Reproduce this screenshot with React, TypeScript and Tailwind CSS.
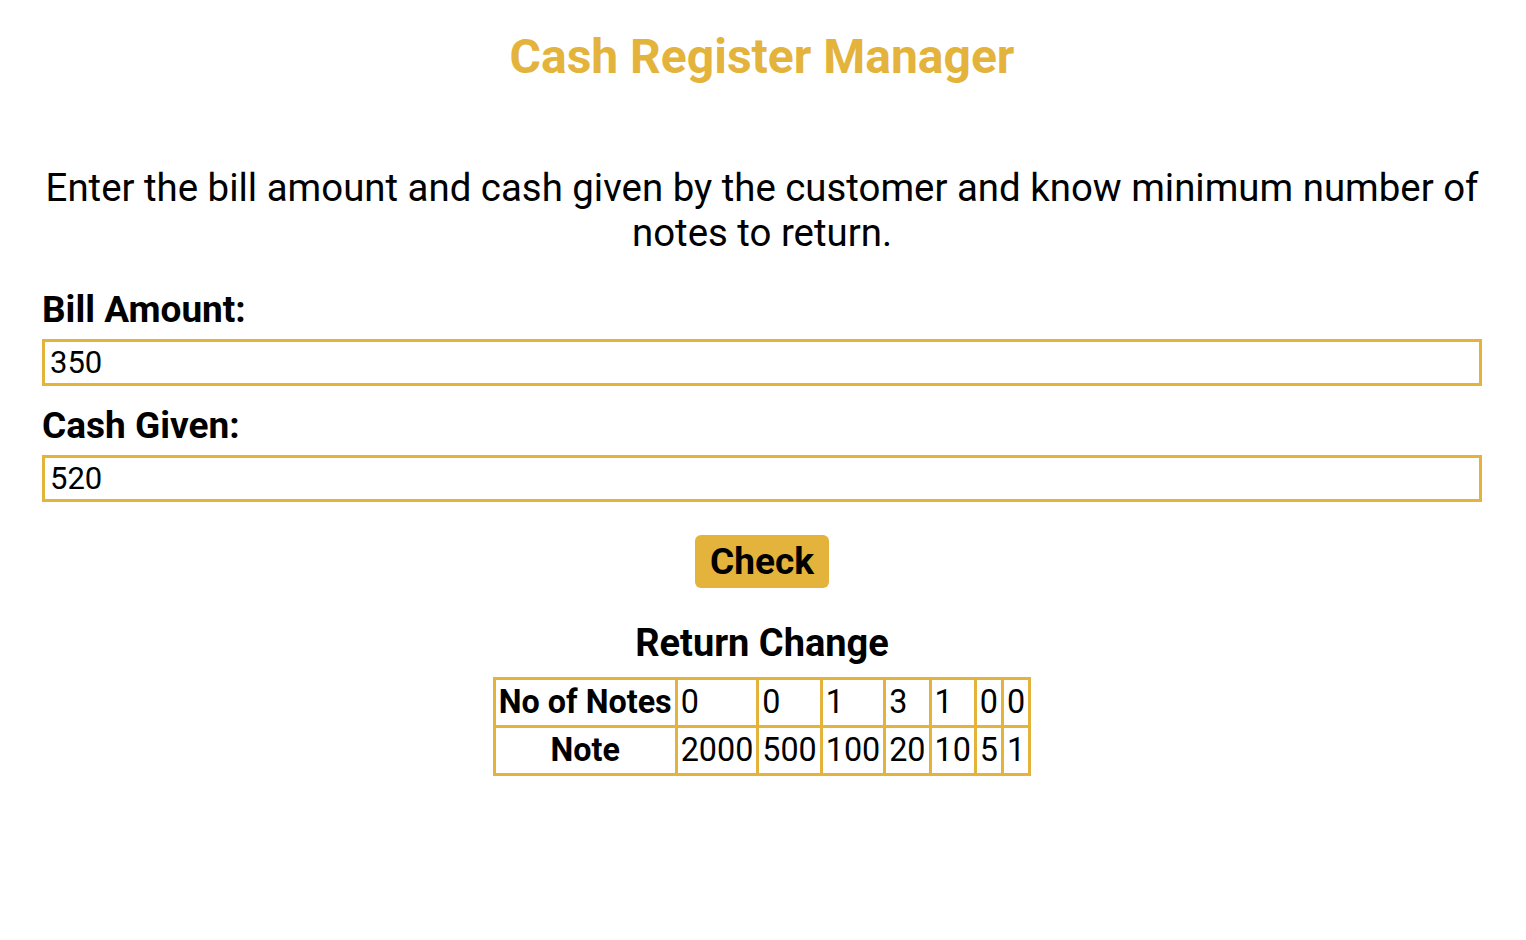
import React from "react";

const NOTES = [2000, 500, 100, 20, 10, 5, 1];
const COUNTS = [0, 0, 1, 3, 1, 0, 0];

export default function App() {
  return (
    <div className="min-h-screen bg-white text-black font-['Roboto',sans-serif] pl-[42px] pr-[44px]">
      <h1 className="pt-[27px] text-center text-[48px] leading-[60px] font-bold text-[#e3b33c]">
        Cash Register Manager
      </h1>

      <p className="mt-[78px] text-center text-[38.4px] leading-[45px]">
        Enter the bill amount and cash given by the customer and know minimum number of notes to return.
      </p>

      <div className="mt-[35px] flex flex-col">
        <label className="text-[37px] leading-[40px] font-bold">Bill Amount:</label>
        <input
          type="number"
          defaultValue="350"
          className="mt-[9px] h-[47px] w-full border-[3px] border-[#e3b33c] px-[5px] text-[31px] outline-none"
        />
        <label className="mt-[20px] text-[37px] leading-[40px] font-bold">Cash Given:</label>
        <input
          type="number"
          defaultValue="520"
          className="mt-[9px] h-[47px] w-full border-[3px] border-[#e3b33c] px-[5px] text-[31px] outline-none"
        />
      </div>

      <div className="flex flex-col items-center">
        <button className="mt-[33px] h-[53px] rounded-[6px] bg-[#e3b33c] px-[15px] text-[37px] font-bold leading-none">
          Check
        </button>

        <h2 className="mt-[33px] text-[38px] leading-[44px] font-bold">Return Change</h2>

        <table className="mt-[12px] border-collapse border-[3px] border-[#e3b33c] text-[32.3px] leading-[45px]">
          <tbody>
            <tr>
              <th className="border-[3px] border-[#e3b33c] px-[3px] font-bold">No of Notes</th>
              {COUNTS.map((c, i) => (
                <td key={i} className="border-[3px] border-[#e3b33c] px-[3px] text-left">
                  {c}
                </td>
              ))}
            </tr>
            <tr>
              <th className="border-[3px] border-[#e3b33c] px-[3px] font-bold">Note</th>
              {NOTES.map((n) => (
                <td key={n} className="border-[3px] border-[#e3b33c] px-[3px] text-left">
                  {n}
                </td>
              ))}
            </tr>
          </tbody>
        </table>
      </div>
    </div>
  );
}
